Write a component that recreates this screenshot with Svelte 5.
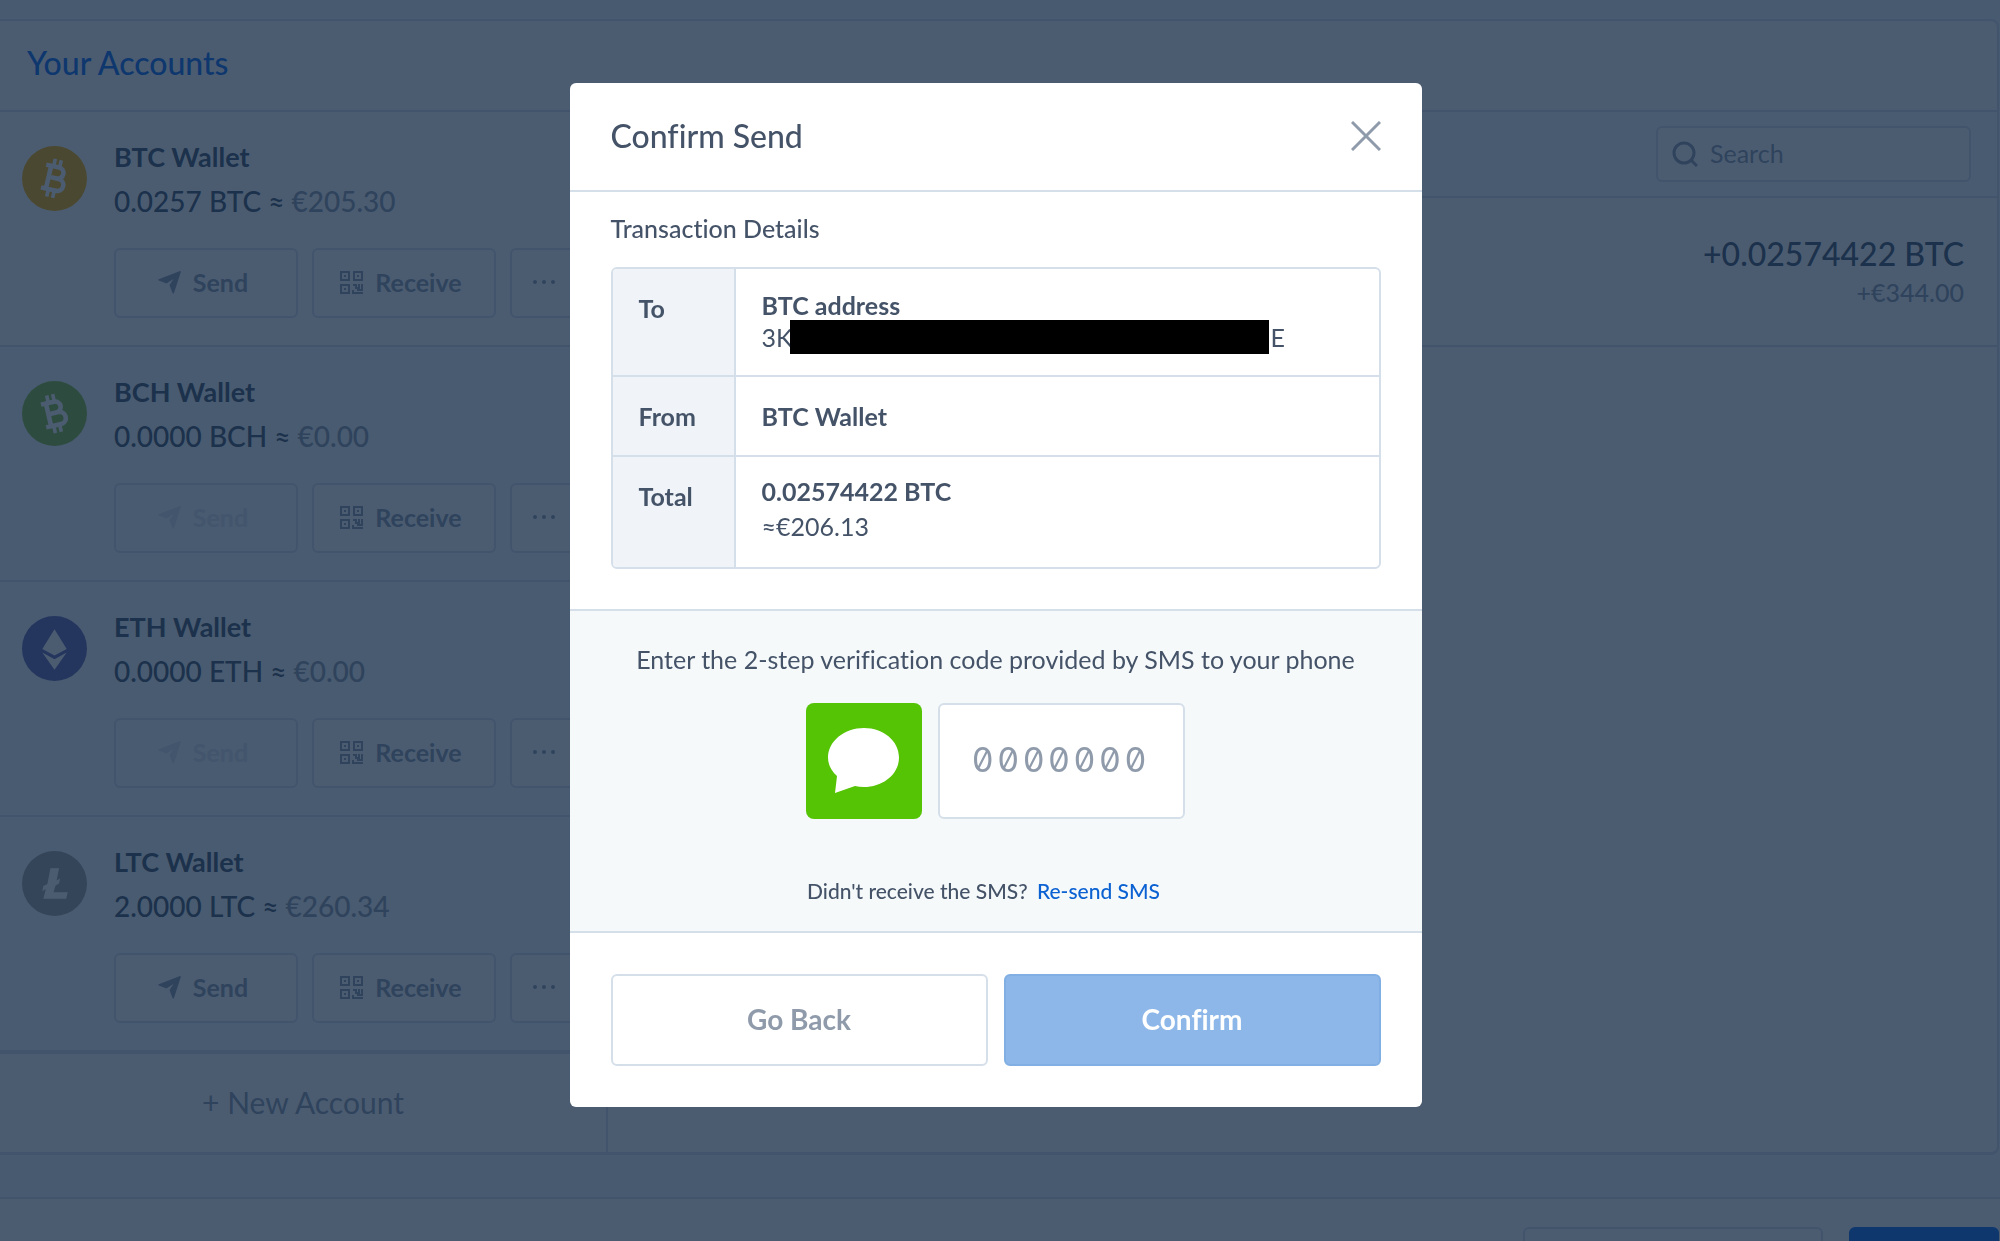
<script lang="ts">
	interface Wallet {
		coin: string;
		name: string;
		balance: string;
		fiat: string;
		color: string;
		canSend: boolean;
	}

	const wallets: Wallet[] = [
		{ coin: 'btc', name: 'BTC Wallet', balance: '0.0257 BTC', fiat: '€205.30', color: '#ffb000', canSend: true },
		{ coin: 'bch', name: 'BCH Wallet', balance: '0.0000 BCH', fiat: '€0.00', color: '#8bbd3c', canSend: false },
		{ coin: 'eth', name: 'ETH Wallet', balance: '0.0000 ETH', fiat: '€0.00', color: '#6366b4', canSend: false },
		{ coin: 'ltc', name: 'LTC Wallet', balance: '2.0000 LTC', fiat: '€260.34', color: '#a5a5a0', canSend: true }
	];

	let search = $state('');
	let code = $state('');
	let active = $state('btc');
</script>

{#snippet coinIcon(coin: string)}
	<svg class="glyph" viewBox="0 0 64 64" aria-hidden="true">
		{#if coin === 'eth'}
			<path d="M32 13 44 32.500 32 39 20 32.500z" />
			<path d="M20 36 32 42.500 44 36 32 53z" />
		{:else if coin === 'ltc'}
			<path d="M28 17h8.500l-2.500 12 3.500-2-1 5-3.500 2-2 6.500h14L43.500 47H21l2.500-9.500-3.500 2 1-5 4-2z" />
		{:else}
			<g transform={coin === 'btc' ? 'rotate(13 32 32)' : 'rotate(-13 32 32)'} fill="none" stroke="#fff" stroke-width="4.500">
				<path d="M21 20.500H34a5.500 5.500 0 0 1 0 11H27M27 31.500H36a6 6 0 0 1 0 12H21M26 20V44" />
				<path stroke-width="3.500" d="M28.500 13v7M34.500 13v7M28.500 44v7M34.500 44v7" />
			</g>
		{/if}
	</svg>
{/snippet}

<div class="page" inert>
	<main class="panel">
		<header class="panel-header">
			<h1>Your Accounts</h1>
		</header>
		<div class="columns">
			<aside class="accounts">
				{#each wallets as w (w.coin)}
					<section class="wallet" class:active={active === w.coin}>
						<div class="coin" style="background: {w.color}">{@render coinIcon(w.coin)}</div>
						<div class="wallet-body">
							<h2>{w.name}</h2>
							<p class="balance">{w.balance} ≈ <span>{w.fiat}</span></p>
							<div class="actions">
								<button disabled={!w.canSend}>
									<svg width="23" height="23" viewBox="0 0 23 23" aria-hidden="true">
										<path d="M22 0q1 0 .8 1L16 22q-.8 1.500-1.500 0L11.500 14l4-6-7 4.500L.7 9.500q-1-.7 0-1.300z" fill="currentColor" />
									</svg>
									Send
								</button>
								<button>
									<svg width="23" height="23" viewBox="0 0 23 23" fill="none" stroke="currentColor" stroke-width="2" aria-hidden="true">
										<path d="M1 1h8v8H1zM14 1h8v8h-8zM1 14h8v8H1zM13 14h3v3h3v-4M22 13v6h-5M13 19v3h10" />
										<path d="M4 5h2M17 5h2M4 18h2" />
									</svg>
									Receive
								</button>
								<button class="more" aria-label="More">
									<svg width="22" height="4" viewBox="0 0 22 4" fill="currentColor" aria-hidden="true">
										<circle cx="2" cy="2" r="2" /><circle cx="11" cy="2" r="2" /><circle cx="20" cy="2" r="2" />
									</svg>
								</button>
							</div>
						</div>
					</section>
				{/each}
				<button class="new-account">+ New Account</button>
			</aside>
			<section class="transactions">
				<div class="toolbar">
					<label class="search">
						<svg width="26" height="26" viewBox="0 0 26 26" fill="none" stroke="currentColor" stroke-width="3" aria-hidden="true">
							<circle cx="12" cy="12" r="10" />
							<path d="m19 19 6 6" />
						</svg>
						<input type="text" placeholder="Search" aria-label="Search" bind:value={search} />
					</label>
				</div>
				<div class="transaction">
					<p class="amount">+0.02574422 BTC</p>
					<p class="fiat">+€344.00</p>
				</div>
			</section>
		</div>
	</main>
	<footer class="footer">
		<button class="secondary" aria-label="Cancel"></button>
		<button class="primary" aria-label="Continue"></button>
	</footer>
</div>

<div class="overlay">
	<div class="modal" role="dialog" aria-modal="true" aria-labelledby="modal-title">
		<header class="modal-header">
			<h2 id="modal-title">Confirm Send</h2>
			<button class="close" aria-label="Close">
				<svg width="30" height="30" viewBox="0 0 30 30" fill="none" stroke="currentColor" stroke-width="3" aria-hidden="true">
					<path d="m1 1 28 28M29 1 1 29" />
				</svg>
			</button>
		</header>

		<section class="details">
			<h3>Transaction Details</h3>
			<div class="table-frame">
				<table>
					<tbody>
						<tr class="to">
							<th scope="row">To</th>
							<td>
								<strong>BTC address</strong>
								<div class="address">3K<span class="redacted"></span>E</div>
							</td>
						</tr>
						<tr class="from">
							<th scope="row">From</th>
							<td><strong>BTC Wallet</strong></td>
						</tr>
						<tr class="total">
							<th scope="row">Total</th>
							<td>
								<strong>0.02574422 BTC</strong>
								<div>≈€206.13</div>
							</td>
						</tr>
					</tbody>
				</table>
			</div>
		</section>

		<section class="verify">
			<label for="code">Enter the 2-step verification code provided by SMS to your phone</label>
			<div class="code-row">
				<div class="sms">
					<svg width="72" height="66" viewBox="0 0 72 66" fill="#fff" aria-hidden="true">
						<path d="M36 0C55.500 0 71 13 71 29.500S55.500 59 36 59q-5 0-9-1L7 65l2-17C3.500 43 0 37 0 29.500 0 13 16.500 0 36 0z" />
					</svg>
				</div>
				<input id="code" type="text" placeholder="0000000" maxlength="7" bind:value={code} />
			</div>
			<p class="resend">Didn't receive the SMS? <a href="#resend">Re-send SMS</a></p>
		</section>

		<footer class="modal-footer">
			<button class="back">Go Back</button>
			<button class="confirm">Confirm</button>
		</footer>
	</div>
</div>

<style>
	:global(body) {
		margin: 0;
		overflow: hidden;
		background: #f0f5f8;
	}

	.page,
	.overlay {
		--text: #455368;
		--muted: #8f9bab;
		--border: #d5dfe9;
		--tint: #f5f9fa;
		box-sizing: border-box;
		height: 100vh;
		font-family: Lato, 'Open Sans', sans-serif;
		font-size: 25px;
		font-variant-ligatures: no-common-ligatures;
		color: var(--text);
	}

	.page *,
	.overlay * {
		box-sizing: border-box;
	}

	h1,
	h2,
	h3,
	p {
		margin: 0;
		font-weight: 500;
	}

	button,
	input {
		font: inherit;
		color: inherit;
		border: 2px solid var(--border);
		border-radius: 6px;
		background: #fff;
	}

	.page {
		display: flex;
		flex-direction: column;
		overflow: hidden;
		padding-top: 19px;
	}

	.panel {
		flex: none;
		margin-right: 1px;
		border: solid var(--border);
		border-width: 2px 2px 3px 0;
		border-radius: 0 8px 8px 0;
		background: #fff;
	}

	.panel-header {
		height: 91px;
		padding: 22px 27px;
		border-bottom: 2px solid var(--border);
	}

	.panel-header h1 {
		font-size: 32px;
		line-height: 40px;
		color: #0c6cf2;
	}

	.columns {
		display: flex;
	}

	.accounts {
		flex: none;
		width: 608px;
		border-right: 2px solid var(--border);
	}

	.wallet {
		display: flex;
		gap: 27px;
		height: 235px;
		padding: 29px 22px 0;
		overflow: hidden;
		border-bottom: 2px solid var(--border);
		background: var(--tint);
	}

	.wallet.active {
		background: #fff;
	}

	.coin {
		flex: none;
		width: 65px;
		height: 65px;
		margin-top: 5px;
		border-radius: 50%;
	}

	.glyph {
		display: block;
		width: 100%;
		height: 100%;
		fill: #fff;
	}

	.wallet h2 {
		font-size: 27px;
		line-height: 32px;
		font-weight: 700;
	}

	.balance {
		margin-top: 8px;
		font-size: 28px;
		line-height: 40px;
	}

	.balance span {
		color: var(--muted);
	}

	.actions {
		display: flex;
		gap: 14px;
		margin-top: 27px;
	}

	.actions button {
		display: flex;
		align-items: center;
		justify-content: center;
		gap: 12px;
		flex: none;
		width: 184px;
		height: 70px;
		padding: 0 6px 2px 0;
		font-weight: 700;
		color: var(--muted);
	}

	.actions button:disabled {
		background: transparent;
		color: #dbe2ea;
	}

	.actions .more {
		width: 70px;
		padding: 0 2px 2px 0;
	}

	.new-account {
		width: 100%;
		height: 100px;
		padding-bottom: 4px;
		border-width: 2px 0 0;
		border-radius: 0;
		font-size: 30px;
		color: var(--muted);
	}

	.transactions {
		flex: 1;
		text-align: right;
	}

	.toolbar {
		display: flex;
		justify-content: flex-end;
		height: 86px;
		padding: 14px 26px;
		border-bottom: 2px solid var(--border);
		background: var(--tint);
	}

	.search {
		display: flex;
		align-items: center;
		gap: 12px;
		width: 315px;
		height: 56px;
		padding: 0 14px;
		border: 2px solid var(--border);
		border-radius: 6px;
		background: #fff;
		color: var(--muted);
	}

	.search svg {
		flex: none;
	}

	.search input {
		width: 100%;
		padding: 0 0 2px;
		border: 0;
	}

	.search input::placeholder,
	.verify input::placeholder {
		color: var(--muted);
		opacity: 1;
	}

	.transaction {
		height: 149px;
		padding: 36px 33px 0;
		border-bottom: 2px solid var(--border);
	}

	.amount {
		font-size: 32px;
		line-height: 40px;
	}

	.fiat {
		line-height: 36px;
		color: var(--muted);
	}

	.footer {
		display: flex;
		flex: 1;
		justify-content: flex-end;
		gap: 26px;
		margin-top: 42px;
		padding: 28px 1px 0 0;
		border-top: 2px solid var(--border);
		background: #fff;
	}

	.footer button {
		width: 300px;
		height: 90px;
	}

	.footer .primary {
		width: 150px;
		border-color: #0c6cf2;
		background: #0c6cf2;
	}

	.overlay {
		position: fixed;
		inset: 0;
		padding: 83px 9px 0 0;
		background: rgba(15, 38, 65, 0.75);
	}

	.modal {
		width: 852px;
		margin: 0 auto;
		overflow: hidden;
		border-radius: 6px;
		background: #fff;
	}

	.modal-header {
		display: flex;
		align-items: center;
		justify-content: space-between;
		height: 109px;
		padding: 0 41px 2px;
		border-bottom: 2px solid var(--border);
	}

	.modal-header h2 {
		font-size: 32px;
		line-height: 40px;
	}

	.close {
		display: flex;
		padding: 0;
		border: 0;
		color: var(--muted);
	}

	.details {
		padding: 20px 41px 40px;
	}

	.details h3 {
		font-size: 25px;
		line-height: 32px;
	}

	.table-frame {
		margin-top: 23px;
		overflow: hidden;
		border: 2px solid var(--border);
		border-radius: 6px;
	}

	table {
		width: 100%;
		border-collapse: collapse;
		line-height: 32px;
	}

	th,
	td {
		padding: 20px 26px 0;
		text-align: left;
		vertical-align: top;
	}

	th {
		width: 122px;
		padding-top: 23px;
		border-right: 2px solid var(--border);
		background: #f0f4f9;
	}

	tr + tr {
		border-top: 2px solid var(--border);
	}

	.to {
		height: 107px;
	}

	.from {
		height: 80px;
	}

	.from td {
		padding-top: 23px;
	}

	.total {
		height: 111px;
	}

	.total td {
		padding-top: 17px;
		line-height: 35px;
	}

	.address {
		display: flex;
		align-items: center;
		height: 32px;
	}

	.redacted {
		width: 479px;
		height: 34px;
		margin: 0 2px 0 -3px;
		background: #000;
	}

	.verify {
		display: flex;
		flex-direction: column;
		align-items: center;
		height: 324px;
		padding-top: 32px;
		border: solid var(--border);
		border-width: 2px 0;
		background: var(--tint);
	}

	.verify label {
		line-height: 32px;
	}

	.code-row {
		display: flex;
		gap: 16px;
		margin-top: 28px;
	}

	.sms {
		display: flex;
		align-items: center;
		justify-content: center;
		width: 116px;
		height: 116px;
		border-radius: 8px;
		background: #54c404;
	}

	.code-row input {
		width: 247px;
		height: 116px;
		padding: 0 32px 4px;
		font-family: Inter, 'DejaVu Sans Mono', monospace;
		font-size: 34px;
		font-feature-settings: 'zero' 1;
		letter-spacing: 4px;
	}

	.resend {
		margin: 56px 24px 0 0;
		font-size: 21px;
		line-height: 32px;
	}

	.resend a {
		margin-left: 4px;
		color: #0c62d2;
		font-weight: 500;
		text-decoration: none;
	}

	.modal-footer {
		display: flex;
		gap: 16px;
		padding: 41px;
	}

	.modal-footer button {
		flex: 1;
		height: 92px;
		padding-bottom: 4px;
		font-size: 28px;
		font-weight: 700;
	}

	.back {
		color: var(--muted);
	}

	.modal-footer .confirm {
		border-color: #82afe3;
		background: #8db7e9;
		color: #fff;
	}
</style>
